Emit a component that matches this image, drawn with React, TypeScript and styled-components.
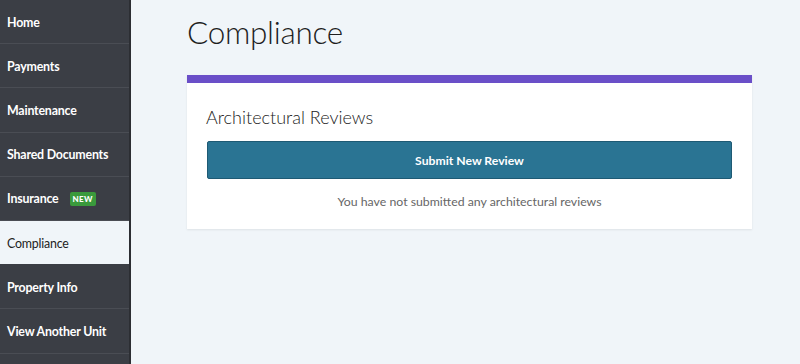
import React from "react";
import styled, { createGlobalStyle } from "styled-components";

const GlobalStyle = createGlobalStyle`
  html, body {
    margin: 0;
    padding: 0;
    background: #f0f5f9;
    font-family: Lato, "Open Sans", sans-serif;
  }
`;

const navItems = [
  { label: "Home" },
  { label: "Payments" },
  { label: "Maintenance" },
  { label: "Shared Documents" },
  { label: "Insurance", badge: "NEW" },
  { label: "Compliance", active: true },
  { label: "Property Info" },
  { label: "View Another Unit" },
];

const App: React.FC = () => {
  return (
    <Layout>
      <GlobalStyle />
      <Sidebar>
        {navItems.map((item) => (
          <NavItem key={item.label} $active={!!item.active}>
            {item.label}
            {item.badge && <Badge>{item.badge}</Badge>}
          </NavItem>
        ))}
      </Sidebar>
      <Main>
        <PageTitle>Compliance</PageTitle>
        <Card>
          <CardTitle>Architectural Reviews</CardTitle>
          <SubmitButton>Submit New Review</SubmitButton>
          <EmptyText>You have not submitted any architectural reviews</EmptyText>
        </Card>
      </Main>
    </Layout>
  );
};

const Layout = styled.div`
  display: flex;
  width: 800px;
  height: 364px;
  overflow: hidden;
`;

const Sidebar = styled.nav`
  width: 129px;
  flex-shrink: 0;
  background: #3b3e45;
  border-right: 2px solid #2c2e33;
  display: flex;
  flex-direction: column;
`;

const NavItem = styled.div<{ $active: boolean }>`
  height: 44.2px;
  box-sizing: border-box;
  display: flex;
  align-items: center;
  padding: 1px 0 0 7px;
  border-bottom: 1px solid ${({ $active }) => ($active ? "#3b3e45" : "#4a4d54")};
  background: ${({ $active }) => ($active ? "#f0f5f9" : "transparent")};
  color: ${({ $active }) => ($active ? "#222" : "#fff")};
  font-weight: ${({ $active }) => ($active ? 400 : 700)};
  font-size: 12.4px;
  letter-spacing: -0.2px;
  white-space: nowrap;
`;

const Badge = styled.span`
  margin-left: 11px;
  background: #3a9a3c;
  color: #fff;
  font-size: 8px;
  font-weight: 900;
  padding: 2px 3px;
  border-radius: 2px;
  letter-spacing: 0.3px;
`;

const Main = styled.main`
  flex: 1;
  padding-left: 56px;
`;

const PageTitle = styled.h1`
  margin: 12px 0 0;
  font-size: 31.5px;
  font-weight: 300;
  color: #1e1e1e;
  letter-spacing: -0.3px;
  line-height: 40px;
`;

const Card = styled.section`
  margin-top: 23px;
  width: 565px;
  box-sizing: border-box;
  background: #fff;
  border-top: 8px solid #6a4fc8;
  box-shadow: 0 1px 2px rgba(0, 0, 0, 0.08);
  padding: 21px 20px 19px;
  display: flex;
  flex-direction: column;
`;

const CardTitle = styled.h2`
  margin: 0 0 11px -1px;
  font-size: 18px;
  font-weight: 300;
  color: #222;
  line-height: 26px;
`;

const SubmitButton = styled.button`
  height: 38px;
  background: #2a7493;
  border: 1px solid #1e5a74;
  border-radius: 2px;
  color: #fff;
  font-family: Lato, sans-serif;
  font-weight: 700;
  font-size: 12.2px;
`;

const EmptyText = styled.p`
  margin: 14px 0 0;
  text-align: center;
  color: #666;
  font-size: 12.3px;
  line-height: 17px;
`;

export default App;
